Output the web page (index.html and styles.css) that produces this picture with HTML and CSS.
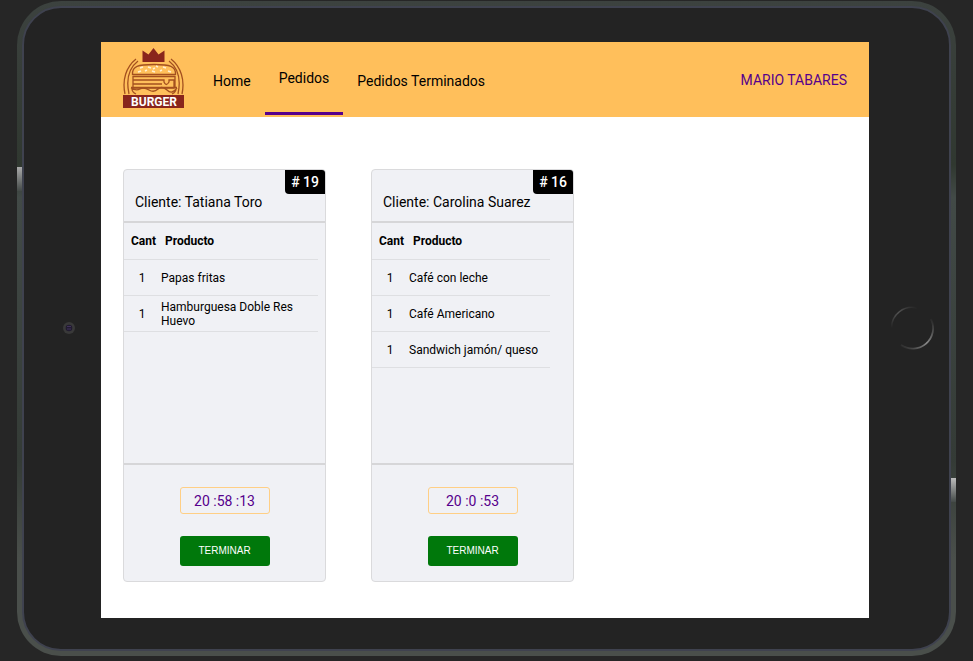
FILE: index.html
```
<!DOCTYPE html>
<html lang="es">
<head>
<meta charset="utf-8">
<meta name="viewport" content="width=device-width, initial-scale=1">
<title>Burger - Pedidos</title>
<link rel="stylesheet" href="styles.css">
</head>
<body>
<div class="tablet">
  <div class="bezel">
    <div class="side"><svg class="camera" width="14" height="14" viewBox="0 0 14 14" aria-hidden="true"><circle cx="7" cy="7" r="6" fill="#393939"/><circle cx="7" cy="7" r="3.3" fill="#211b30"/><path d="M5 5.5h4M5 8h4" stroke="#41325b"/></svg></div>
    <div class="screen">
      <header class="topbar">
        <a class="logo" href="#" aria-label="Burger">
          <svg width="62" height="62" viewBox="0 0 62 62" aria-hidden="true">
            <path d="M19.500 15V3.500l6 4L30.500 1l5 6.500 6-4V15z" fill="#89251c"/>
            <g fill="none" stroke="#a4501f" stroke-width="1.3">
              <path d="M13 12C3 20-1 33 2 47M15 14C6 21 3 33 6 47M48 12C58 20 62 33 59 47M46 14C55 21 58 33 55 47"/>
              <path d="M9.500 27.500C9 19 15 17.500 31 17.500s22 1.500 21.500 10z"/>
              <path d="M10 29.500h42M10 33h31v2q2 5 5 0v-2h5v8H10zM10 29v12M52 29v12M10 37h29"/>
              <path d="M8 40.500h46M8 41q5 3 9 1t9 1 9-1 9 1 10-2M9 42q0 3 4 5M53 42q0 3-4 5"/>
            </g>
            <path d="M17 21l3-1M25 20l3 1M33 19l2 1M40 20l3 1M15 25l3-1M22 24l2-1M29 24l3 1M37 24l2-1M45 24l3 1M30 22l2-1" stroke="#fff0d3" stroke-width="1.500"/>
            <rect x="0" y="48" width="61" height="13" fill="#89251c"/>
            <text class="logo-text" x="31" y="59" text-anchor="middle">BURGER</text>
          </svg>
        </a>
        <nav class="nav">
          <a href="#">Home</a>
          <a class="active" href="#" aria-current="page">Pedidos</a>
          <a href="#">Pedidos Terminados</a>
        </nav>
        <a class="user" href="#">MARIO TABARES</a>
      </header>
      <main class="orders">
        <article class="card">
          <header class="card-head"><span class="badge"># 19</span><p>Cliente: Tatiana Toro</p></header>
          <div class="card-body">
            <table>
              <thead><tr><th>Cant</th><th>Producto</th></tr></thead>
              <tbody>
                <tr><td>1</td><td>Papas fritas</td></tr>
                <tr><td>1</td><td>Hamburguesa Doble Res Huevo</td></tr>
              </tbody>
            </table>
          </div>
          <footer class="card-foot"><time class="timer">20 :58 :13</time><button class="finish" type="button">TERMINAR</button></footer>
        </article>
        <article class="card">
          <header class="card-head"><span class="badge"># 16</span><p>Cliente: Carolina Suarez</p></header>
          <div class="card-body">
            <table>
              <thead><tr><th>Cant</th><th>Producto</th></tr></thead>
              <tbody>
                <tr><td>1</td><td>Café con leche</td></tr>
                <tr><td>1</td><td>Café Americano</td></tr>
                <tr><td>1</td><td>Sandwich jamón/ queso</td></tr>
              </tbody>
            </table>
          </div>
          <footer class="card-foot"><time class="timer">20 :0 :53</time><button class="finish" type="button">TERMINAR</button></footer>
        </article>
      </main>
    </div>
    <div class="side"><svg width="44" height="44" viewBox="0 0 44 44" fill="none" aria-hidden="true">
      <defs>
        <linearGradient id="ring-a" x1="0" y1="1" x2="1" y2="0"><stop offset="0" stop-color="#232323"/><stop offset=".5" stop-color="#555"/><stop offset="1" stop-color="#232323"/></linearGradient>
        <linearGradient id="ring-b" x1="0" y1="1" x2="1" y2="0"><stop offset="0" stop-color="#232323"/><stop offset=".5" stop-color="#888"/><stop offset="1" stop-color="#232323"/></linearGradient>
      </defs>
      <path d="M1.500 22A20.500 20.500 0 0 1 27 2" stroke="url(#ring-a)" stroke-width="1.500"/>
      <path d="M41 13A20.500 20.500 0 0 1 11 39" stroke="url(#ring-b)" stroke-width="1.800"/>
    </svg></div>
  </div>
</div>
</body>
</html>
```
FILE: styles.css
```
* { box-sizing: border-box; }
body {
  margin: 0;
  min-height: 100vh;
  padding: 1px 17px 5px;
  display: flex;
  background: #262626;
  color: #000;
  font: 14px/16px Roboto, sans-serif;
}
a { color: inherit; text-decoration: none; }
p { margin: 0; }

.tablet {
  flex: 1;
  display: flex;
  padding: 5px;
  border-radius: 44px;
  background:
    linear-gradient(#aaa, #444a48) left 166px / 5px 24px no-repeat,
    linear-gradient(#bbb, #444a48) right 477px / 5px 24px no-repeat,
    linear-gradient(#3c423f, #303830 25%, #424a47 30%, #343b36 70%, #4a4f4b 85%);
  background-position: left 0 top 166px, right 0 top 477px, 0 0;
}
.bezel {
  flex: 1;
  display: grid;
  grid-template-columns: 77px 1fr 80px;
  padding: 34px 0 31px;
  border: 2px solid #3f424f;
  border-radius: 39px;
  background: #232323;
}
.side { display: flex; align-items: center; justify-content: center; padding-bottom: 4px; }
.side:first-child { padding-left: 13px; }
.side:last-child { padding-left: 6px; }
.side svg { display: block; }

.screen { background: #fff; }
.topbar {
  height: 75px;
  display: flex;
  align-items: center;
  padding: 0 22px;
  background: #ffbf5b;
}
.logo { display: block; height: 62px; margin: 0 14px 4px 0; }
.logo svg { display: block; }
.logo-text { font: bold 12px/12px Roboto, sans-serif; fill: #fff; }
.nav { display: flex; align-self: stretch; }
.nav a {
  display: flex;
  align-items: center;
  padding: 2px 14px 0;
}
.nav .active { margin-bottom: 2px; border-bottom: 3px solid #56008c; padding-top: 2px; }
.user { margin-left: auto; padding-top: 1px; color: #56008c; }

.orders {
  display: flex;
  flex-wrap: wrap;
  gap: 45px;
  padding: 52px 22px 36px;
}
.card {
  width: 203px;
  border: 1px solid #dadadc;
  border-radius: 4px;
  background: #f0f1f5;
}
.card-head {
  position: relative;
  padding: 24px 11px 11px;
  border-bottom: 2px solid #d6d6d8;
}
.badge {
  position: absolute;
  top: 0;
  right: 0;
  padding: 4px 6px;
  border-radius: 0 3px 0 4px;
  background: #000;
  color: #fff;
  font-weight: 500;
}
.card-body { min-height: 242px; border-bottom: 2px solid #d6d6d8; }

table {
  max-width: 194px;
  border-collapse: separate;
  border-spacing: 0;
  font-size: 12px;
  line-height: 14px;
}
th, td { height: 36px; border-bottom: 1px solid #dedfe2; text-align: left; }
th { height: 37px; padding: 0 0 0 5px; }
td { padding: 0 12px 0 1px; }
th:first-child { width: 36px; min-width: 36px; padding-left: 7px; }
td:first-child { padding: 0; text-align: center; }

.card-foot {
  display: flex;
  flex-direction: column;
  align-items: center;
  gap: 22px;
  padding: 22px 0 15px;
}
.timer {
  width: 90px;
  padding: 5px 0 4px;
  border: 1px solid #ffcf85;
  border-radius: 3px;
  color: #56008c;
  text-align: center;
}
.finish {
  width: 90px;
  height: 30px;
  padding: 0;
  border: 0;
  border-radius: 3px;
  background: #00780b;
  color: #fff;
  font: 10px/12px "Liberation Sans", sans-serif;
}
```
